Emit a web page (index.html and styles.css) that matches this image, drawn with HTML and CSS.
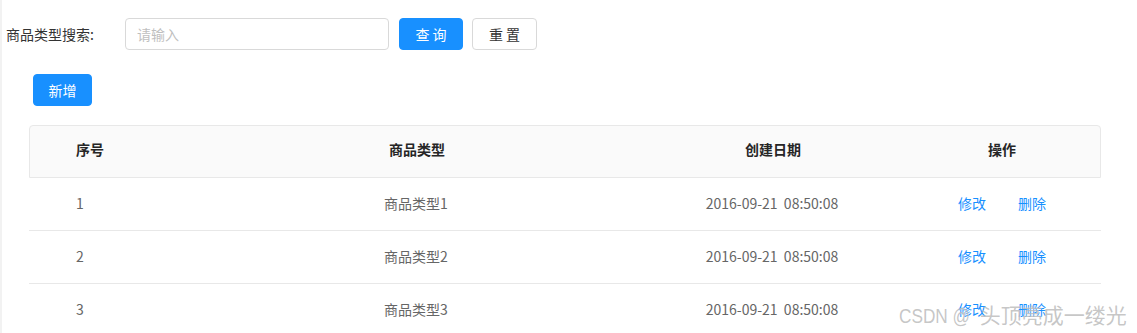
FILE: index.html
```html
<!DOCTYPE html>
<html lang="zh-CN">
<head>
<meta charset="utf-8">
<title>商品类型</title>
<link rel="stylesheet" href="styles.css">
</head>
<body>
<div class="page">
  <div class="search">
    <span class="label">商品类型搜索:</span>
    <div class="input"><span class="placeholder">请输入</span></div>
    <button class="btn btn-primary btn-search">查 询</button>
    <button class="btn btn-default">重 置</button>
  </div>
  <div class="toolbar">
    <button class="btn btn-primary btn-add">新增</button>
  </div>
  <div class="table">
    <div class="row head">
      <div class="cell c1">序号</div>
      <div class="cell c2">商品类型</div>
      <div class="cell c3">创建日期</div>
      <div class="cell c4">操作</div>
    </div>
    <div class="row body">
      <div class="cell c1">1</div>
      <div class="cell c2">商品类型1</div>
      <div class="cell c3 date">2016-09-21  08:50:08</div>
      <div class="cell c4"><a class="link">修改</a><a class="link">删除</a></div>
    </div>
    <div class="row body">
      <div class="cell c1">2</div>
      <div class="cell c2">商品类型2</div>
      <div class="cell c3 date">2016-09-21  08:50:08</div>
      <div class="cell c4"><a class="link">修改</a><a class="link">删除</a></div>
    </div>
    <div class="row body">
      <div class="cell c1">3</div>
      <div class="cell c2">商品类型3</div>
      <div class="cell c3 date">2016-09-21  08:50:08</div>
      <div class="cell c4"><a class="link">修改</a><a class="link">删除</a></div>
    </div>
  </div>
  <div class="watermark"><span class="wm-latin">CSDN @</span>头顶亮成一缕光</div>
</div>
</body>
</html>
```

FILE: styles.css
```css
html, body {
  margin: 0;
  padding: 0;
  background: #fff;
}
body {
  font-family: "Noto Sans CJK SC", "Noto Sans", sans-serif;
  font-size: 14px;
  color: #333;
  overflow: hidden;
}
.page {
  position: relative;
  box-sizing: border-box;
  height: 333px;
  border-left: 2px solid #f2f2f2;
  padding: 18px 0 0 4px;
}
.search {
  display: flex;
  align-items: center;
  height: 32px;
}
.label {
  width: 119px;
  color: #333;
  line-height: 32px;
}
.input {
  box-sizing: border-box;
  width: 264px;
  height: 32px;
  border: 1px solid #d9d9d9;
  border-radius: 4px;
  padding: 0 11px;
  display: flex;
  align-items: center;
  margin-right: 10px;
}
.placeholder {
  color: #bfbfbf;
}
.btn {
  box-sizing: border-box;
  height: 32px;
  border-radius: 4px;
  font-family: inherit;
  font-size: 14px;
  padding: 0;
  cursor: pointer;
  white-space: pre;
}
.btn-primary {
  background: #1890ff;
  border: 1px solid #1890ff;
  color: #fff;
}
.btn-default {
  background: #fff;
  border: 1px solid #d9d9d9;
  color: #333;
  width: 65px;
}
.btn-search {
  width: 64px;
  margin-right: 9px;
}
.toolbar {
  margin-top: 24px;
  padding-left: 27px;
  display: flex;
}
.btn-add {
  width: 59px;
}
.table {
  margin: 19px 0 0 23px;
  width: 1072px;
}
.row {
  display: grid;
  grid-template-columns: 167px 440px 272px 1fr;
  box-sizing: border-box;
  height: 53px;
  border-bottom: 1px solid #e8e8e8;
  align-items: center;
}
.head {
  background: #fafafa;
  border: 1px solid #e8e8e8;
  border-radius: 4px 4px 0 0;
  font-weight: bold;
  color: #262626;
}
.head .cell {
  padding-bottom: 6px;
}
.head .c1 {
  padding-left: 46px;
}
.body {
  color: #666;
}
.body .cell {
  padding-bottom: 3px;
}
.body .c1 {
  padding-left: 47px;
}
.cell {
  line-height: 20px;
}
.c2, .c3, .c4 {
  text-align: center;
}
.c4 {
  padding-right: 5px;
}
.date {
  white-space: pre;
}
.c4.cell {
  display: flex;
  justify-content: center;
  gap: 32px;
}
.link {
  color: #1890ff;
  cursor: pointer;
}
.watermark {
  position: absolute;
  left: 897px;
  top: 299px;
  font-family: "Liberation Sans", "Noto Sans CJK SC", sans-serif;
  font-size: 21px;
  color: rgba(150, 150, 150, 0.55);
  text-shadow: 0 0 1px rgba(255, 255, 255, 0.8);
  white-space: nowrap;
  pointer-events: none;
}
.wm-latin {
  display: inline-block;
  transform: scaleX(0.82);
  transform-origin: left center;
  margin-right: -6px;
}
```
